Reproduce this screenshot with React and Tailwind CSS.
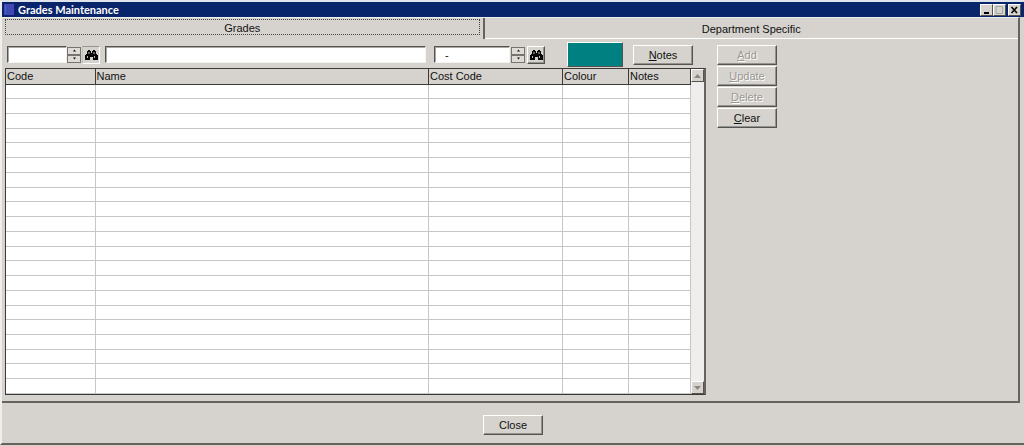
import React, { useState } from 'react';
import clsx from 'clsx';

const ROW_COUNT = 21;

const COLUMNS = [
  { label: 'Code', width: 'w-[89px]' },
  { label: 'Name', width: '' },
  { label: 'Cost Code', width: 'w-[134px]' },
  { label: 'Colour', width: 'w-[66px]' },
  { label: 'Notes', width: 'w-[62px]' },
];

const ACTIONS = [
  { label: 'Add', disabled: true },
  { label: 'Update', disabled: true },
  { label: 'Delete', disabled: true },
  { label: 'Clear', disabled: false },
];

const raised = 'border border-t-white border-l-white border-r-[#55534f] border-b-[#55534f] bg-[#d6d3ce]';
const sunken = 'border border-t-[#55534f] border-l-[#55534f] border-r-[#f4f3f0] border-b-[#f4f3f0] bg-white shadow-[inset_1px_1px_0_#aaa7a2]';

const PushButton = ({ label, hotkey = true, disabled = false }) => (
  <button
    type="button"
    disabled={disabled}
    className={clsx(
      raised,
      'h-5 w-[60px] shrink-0 text-center shadow-[inset_-1px_-1px_0_#96938e]',
      disabled && 'text-[#9a9792] [text-shadow:1px_1px_0_#fff]'
    )}
  >
    {hotkey ? (
      <>
        <span className="underline">{label[0]}</span>
        {label.slice(1)}
      </>
    ) : (
      label
    )}
  </button>
);

const Spinner = ({ label }) => (
  <div className="flex h-4 w-[14px] shrink-0 flex-col">
    <button type="button" aria-label={`${label} up`} className="flex h-2 items-center justify-center border border-[#77746f] bg-[#dedbd6]">
      <svg viewBox="0 0 5 3" className="h-[3px] w-[5px]">
        <path d="M2.5 0.5L4 2.5H1z" fill="#111" />
      </svg>
    </button>
    <button type="button" aria-label={`${label} down`} className="flex h-2 items-center justify-center border border-[#77746f] bg-[#dedbd6]">
      <svg viewBox="0 0 5 3" className="h-[3px] w-[5px]">
        <path d="M2.5 2.5L4 0.5H1z" fill="#111" />
      </svg>
    </button>
  </div>
);

const SearchButton = ({ label, pressed = false }) => (
  <button
    type="button"
    aria-label={label}
    className={clsx(
      'flex h-[18px] w-[18px] shrink-0 items-center justify-center',
      pressed
        ? 'border border-t-[#96938e] border-l-[#c4c1bc] border-r-white border-b-white bg-[#d6d3ce]'
        : clsx(raised, 'shadow-[inset_-1px_-1px_0_#96938e]')
    )}
  >
    <svg viewBox="0 0 13 12" className="h-3 w-[13px]">
      <path d="M3 1h2v1h1v2h1V2h1V1h2v1h1v3h1v1h1v5H8V8H5v3H0V6h1V5h1V2h1z" fill="#080808" />
      <path d="M3.500 3h1v2h-1zM8.500 3h1v2h-1zM2 7h1v2H2zM9 7h1v2H9z" fill="#bdbab5" />
    </svg>
  </button>
);

const TitleBar = () => (
  <header className="flex h-[15px] items-center bg-[#08246b] pl-px pr-[3px] text-white">
    <svg viewBox="0 0 13 14" className="h-[14px] w-[13px]">
      <path d="M1 1h10v11H1z" fill="#3f49b4" />
      <path d="M11 1h2v12H3v-1h8z" fill="#141d75" />
      <path d="M2 2h1v9H2z" fill="#535dc4" />
    </svg>
    <h1 className="ml-[2px] flex-1 font-['Lato',sans-serif] text-[11px] leading-[15px] font-bold">Grades Maintenance</h1>
    <button type="button" aria-label="Minimize" className={clsx(raised, 'h-3 w-[13px]')}>
      <svg viewBox="0 0 11 10" className="h-[10px] w-[11px]">
        <path d="M3 7h5v2H3z" fill="#000" />
      </svg>
    </button>
    <button type="button" aria-label="Maximize" disabled className={clsx(raised, 'h-3 w-[13px]')}>
      <svg viewBox="0 0 11 10" className="h-[10px] w-[11px]">
        <path d="M2 1.500h6.500v7H2z" fill="none" stroke="#a3a8a0" />
      </svg>
    </button>
    <button type="button" aria-label="Close window" className={clsx(raised, 'ml-[2px] h-3 w-[13px]')}>
      <svg viewBox="0 0 11 10" className="h-[10px] w-[11px]">
        <path d="M2.500 2L8 8M8 2L2.500 8" stroke="#000" strokeWidth="1.600" />
      </svg>
    </button>
  </header>
);

const Tabs = ({ active, onChange }) => (
  <div role="tablist" className="grid h-[21px] grid-cols-[19fr_21fr]">
    <button
      type="button"
      role="tab"
      aria-selected={active === 'grades'}
      onClick={() => onChange('grades')}
      className="flex items-start border-r-2 border-[#66635e] px-[3px] pt-px"
    >
      <span className="h-4 flex-1 border border-dotted border-[#444] leading-4">Grades</span>
    </button>
    <button
      type="button"
      role="tab"
      aria-selected={active === 'department'}
      onClick={() => onChange('department')}
      className="flex items-start justify-center border-b border-white pt-[3px]"
    >
      Department Specific
    </button>
  </div>
);

const GradesTable = () => (
  <div className="flex border border-[#3c3a37] border-r-2 border-r-[#66635e]">
    <table className="h-[325px] flex-1 table-fixed border-collapse bg-white">
      <thead>
        <tr className="h-[15px] bg-[#d6d3ce]">
          {COLUMNS.map((column) => (
            <th
              key={column.label}
              scope="col"
              className={clsx(column.width, 'border-r border-b border-[#3c3a37] p-0 pl-px text-left leading-[14px] font-normal')}
            >
              {column.label}
            </th>
          ))}
        </tr>
      </thead>
      <tbody>
        {Array.from({ length: ROW_COUNT }, (_, row) => (
          <tr key={row}>
            {COLUMNS.map((column) => (
              <td key={column.label} className="border-r border-b border-[#c6c6c6] p-0" />
            ))}
          </tr>
        ))}
      </tbody>
    </table>
    <div className="flex w-[13px] flex-col justify-between bg-[#efeeec]">
      <button type="button" aria-label="Scroll up" className={clsx(raised, 'flex h-[13px] items-center justify-center')}>
        <svg viewBox="0 0 7 4" className="h-1 w-[7px]">
          <path d="M3.500 0L7 4H0z" fill="#8c8984" />
        </svg>
      </button>
      <button type="button" aria-label="Scroll down" className={clsx(raised, 'flex h-[13px] items-center justify-center')}>
        <svg viewBox="0 0 7 4" className="h-1 w-[7px]">
          <path d="M3.500 4L7 0H0z" fill="#8c8984" />
        </svg>
      </button>
    </div>
  </div>
);

export default function App() {
  const [tab, setTab] = useState('grades');
  const [code, setCode] = useState('');
  const [name, setName] = useState('');
  const [costCode, setCostCode] = useState('  -');

  return (
    <div className="bg-[#d6d3ce] pb-px font-['Liberation_Sans',Arial,sans-serif] text-[11px] leading-4 text-[#111]">
      <div className="border-t-2 border-b-2 border-l-2 border-t-[#dfe3ec] border-b-[#66635e] border-l-[#efeeec]">
        <TitleBar />
        <main className="mr-1 border-t border-r-2 border-b-2 border-t-[#efeeec] border-r-[#66635e] border-b-[#66635e]">
          <Tabs active={tab} onChange={setTab} />
          <div className="flex pt-[3px] pb-[6px] pl-[3px]">
            <div className="flex min-w-0 flex-1 flex-col">
              <div className="flex h-[25px] items-center pl-[2px]">
                <input aria-label="Code" value={code} onChange={(e) => setCode(e.target.value)} className={clsx(sunken, 'h-[17px] w-[60px] px-1 outline-none')} />
                <Spinner label="Code" />
                <div className="ml-px flex">
                  <SearchButton label="Find code" pressed />
                </div>
                <input aria-label="Name" value={name} onChange={(e) => setName(e.target.value)} className={clsx(sunken, 'ml-[5px] h-[17px] min-w-0 flex-1 px-1 outline-none')} />
                <input aria-label="Cost code" value={costCode} onChange={(e) => setCostCode(e.target.value)} className={clsx(sunken, 'ml-2 h-[17px] w-[76px] px-1 outline-none')} />
                <div className="ml-px flex">
                  <Spinner label="Cost code" />
                </div>
                <div className="ml-[2px] flex">
                  <SearchButton label="Find cost code" />
                </div>
                <button type="button" aria-label="Pick colour" className="ml-[22px] h-[25px] w-14 border border-t-white border-l-white border-r-[#55534f] border-b-[#55534f] bg-[#008080]" />
                <div className="mr-[13px] ml-[10px] flex">
                  <PushButton label="Notes" />
                </div>
              </div>
              <div className="mt-px flex flex-col">
                <GradesTable />
              </div>
            </div>
            <div className="flex w-[312px] shrink-0 flex-col gap-px pt-[3px] pl-[11px]">
              {ACTIONS.map((action) => (
                <PushButton key={action.label} label={action.label} disabled={action.disabled} />
              ))}
            </div>
          </div>
        </main>
        <footer className="flex h-10 items-center justify-center pt-1">
          <PushButton label="Close" hotkey={false} />
        </footer>
      </div>
    </div>
  );
}
